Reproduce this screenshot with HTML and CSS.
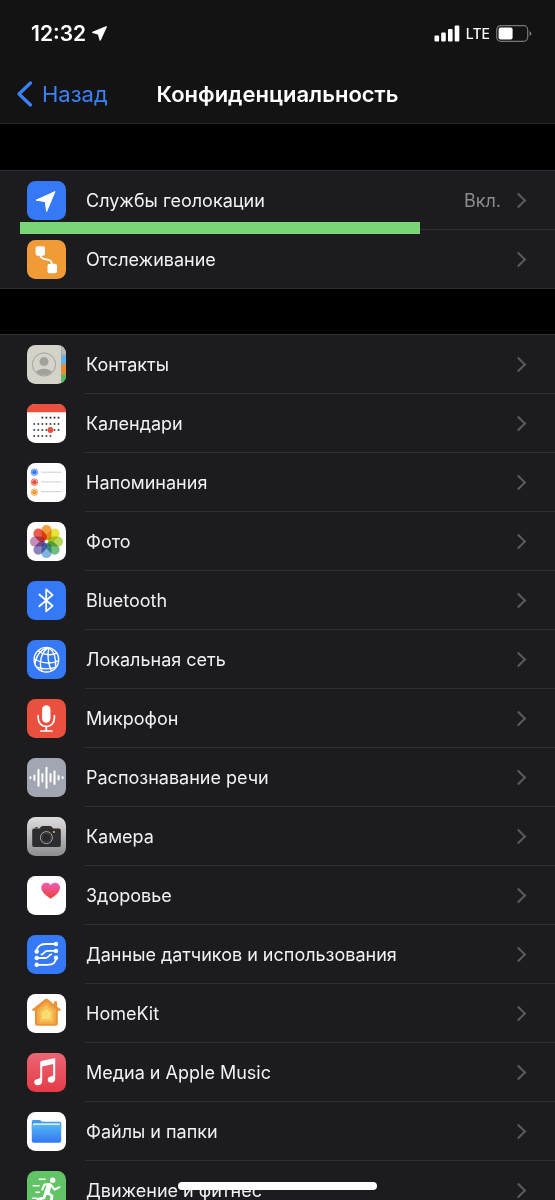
FILE: index.html
```html
<!DOCTYPE html>
<html lang="ru">

<head>
    <meta charset="UTF-8">
    <meta name="viewport" content="width=device-width, initial-scale=1.0">
    <title>Конфиденциальность</title>
    <link rel="stylesheet" href="styles.css">
</head>

<body>
    <!-- Header Section -->
    <header class="header">
        <div class="status-bar">
            <div class="status-left">
                <span class="time">12:32</span>
                <svg width="15" height="15" viewBox="0 0 15 15"><path d="M0.8 6.4 L14.2 0.8 L8.2 14 L6.6 8.2 Z" fill="#fff" stroke="#fff" stroke-width="1.4" stroke-linejoin="round"/></svg>
            </div>
            <div class="status-right">
                <svg width="26" height="17" viewBox="0 0 26 17" fill="#fff">
                    <rect x="0.5" y="10.5" width="4.6" height="6" rx="1"/>
                    <rect x="7.2" y="7.5" width="4.6" height="9" rx="1"/>
                    <rect x="14" y="4" width="4.6" height="12.5" rx="1"/>
                    <rect x="20.7" y="0.5" width="4.6" height="16" rx="1"/>
                </svg>
                <span class="network">LTE</span>
                <svg width="36" height="17" viewBox="0 0 36 17">
                    <rect x="0.7" y="0.7" width="31" height="15.6" rx="4" fill="none" stroke="#77777a" stroke-width="1.2"/>
                    <rect x="2.6" y="2.6" width="14" height="11.8" rx="2" fill="#fff"/>
                    <path d="M33.5 6 Q35.5 7 35.5 8.5 T33.5 11 Z" fill="#77777a"/>
                </svg>
            </div>
        </div>
        <div class="nav-bar">
            <button class="back-btn" type="button">
                <svg width="16" height="26" viewBox="0 0 16 26"><path d="M13.5 2 L2 13 L13.5 24" fill="none" stroke="#3a82f7" stroke-width="3.2" stroke-linecap="round" stroke-linejoin="round"/></svg>
                Назад
            </button>
            <h1>Конфиденциальность</h1>
        </div>
    </header>

    <!-- Settings list -->
    <main class="content">
        <ul class="group marked">
            <li><a class="row" href="#">
                <svg class="icon" viewBox="0 0 39 39"><rect width="39" height="39" rx="8.5" fill="#3579f6"/><path d="M9 19.2 L28 10.6 L19.6 30.6 L18.3 20.6 Z" fill="#fff" stroke="#fff" stroke-linejoin="round"/></svg>
                <span class="row-body"><span class="label">Службы геолокации</span><span class="value">Вкл.</span></span>
            </a></li>
            <li><a class="row" href="#">
                <svg class="icon" viewBox="0 0 39 39"><rect width="39" height="39" rx="8.5" fill="#f09a38"/><rect x="8.6" y="6.3" width="9.4" height="9.4" rx="2" fill="#fff"/><rect x="20.5" y="23.7" width="9.5" height="9.5" rx="2" fill="#fff"/><path d="M13.3 15 C13.3 22 25 16.5 25 24.5" fill="none" stroke="#fff" stroke-width="1.8"/></svg>
                <span class="row-body"><span class="label">Отслеживание</span></span>
            </a></li>
        </ul>

        <ul class="group">
            <li><a class="row" href="#">
                <svg class="icon" viewBox="0 0 39 39">
                    <clipPath id="tile"><rect width="39" height="39" rx="8.5"/></clipPath>
                    <g clip-path="url(#tile)"><rect width="39" height="39" fill="#d3d3c9"/><path fill="#a3a49f" d="M34 0h5v39h-5z"/><path fill="#b9bab5" d="M34.5 0h5v9.5h-5z"/><path fill="#5eb5f2" d="M34.5 10.2h5v8.8h-5z"/><path fill="#ee8c2d" d="M34.5 19.8h5v9.4h-5z"/><path fill="#51bd55" d="M34.5 30h5v9h-5z"/></g>
                    <clipPath id="face"><circle cx="17" cy="19.5" r="10.8"/></clipPath>
                    <circle cx="17" cy="19.5" r="11.6" fill="none" stroke="#9e9c96" stroke-width="0.9"/>
                    <g fill="#a3a099" clip-path="url(#face)"><circle cx="17" cy="16.6" r="4.5"/><ellipse cx="17" cy="29.5" rx="9.3" ry="5.8"/></g>
                </svg>
                <span class="row-body"><span class="label">Контакты</span></span>
            </a></li>
            <li><a class="row" href="#">
                <svg class="icon" viewBox="0 0 39 39">
                    <rect width="39" height="39" rx="8.5" fill="#fff"/><path d="M0 8.2 Q0 0 8.5 0 H30.5 Q39 0 39 8.2 Z" fill="#eb4f3d"/>
                    <g fill="none" stroke="#222" stroke-width="1.7" stroke-dasharray="1.7 2.35"><path d="M14.5 13.7 H32.5"/><path d="M6.4 20 H32.5"/><path d="M6.4 26 H32.5"/><path d="M6.4 32 H24.5"/></g>
                    <circle cx="23.4" cy="26" r="2.9" fill="#eb4f3d"/>
                </svg>
                <span class="row-body"><span class="label">Календари</span></span>
            </a></li>
            <li><a class="row" href="#">
                <svg class="icon" viewBox="0 0 39 39">
                    <rect width="39" height="39" rx="8.5" fill="#fff"/>
                    <g stroke-width="0.7"><circle cx="7.4" cy="9.2" r="3.3" fill="#cfe0fd" stroke="#3579f6"/><circle cx="7.4" cy="19.2" r="3.3" fill="#fbd5d0" stroke="#eb4f3d"/><circle cx="7.4" cy="29.2" r="3.3" fill="#fce6ca" stroke="#f09a38"/></g>
                    <circle cx="7.4" cy="9.2" r="2.3" fill="#3579f6"/><circle cx="7.4" cy="19.2" r="2.3" fill="#eb4f3d"/><circle cx="7.4" cy="29.2" r="2.3" fill="#f09a38"/>
                    <path d="M14 9.2 H34.5 M14 18.9 H34.5 M14 28.7 H34.5" stroke="#cfcfd2"/>
                </svg>
                <span class="row-body"><span class="label">Напоминания</span></span>
            </a></li>
            <li><a class="row" href="#">
                <svg class="icon" viewBox="0 0 39 39">
                    <rect width="39" height="39" rx="8.5" fill="#fff"/>
                    <g class="petals" transform="translate(19.5 19.6)">
                        <rect x="-5" y="-16.5" width="10" height="15" rx="5" fill="#f3a03f"/>
                        <rect x="-5" y="-16.5" width="10" height="15" rx="5" fill="#e9e23d" transform="rotate(45)"/>
                        <rect x="-5" y="-16.5" width="10" height="15" rx="5" fill="#b9d55b" transform="rotate(90)"/>
                        <rect x="-5" y="-16.5" width="10" height="15" rx="5" fill="#71bd84" transform="rotate(135)"/>
                        <rect x="-5" y="-16.5" width="10" height="15" rx="5" fill="#7fb3e0" transform="rotate(180)"/>
                        <rect x="-5" y="-16.5" width="10" height="15" rx="5" fill="#8f83bd" transform="rotate(225)"/>
                        <rect x="-5" y="-16.5" width="10" height="15" rx="5" fill="#c48cb9" transform="rotate(270)"/>
                        <rect x="-5" y="-16.5" width="10" height="15" rx="5" fill="#e85d4b" transform="rotate(315)"/>
                    </g>
                    <circle cx="19.5" cy="19.6" r="1.2" fill="#fff"/>
                </svg>
                <span class="row-body"><span class="label">Фото</span></span>
            </a></li>
            <li><a class="row" href="#">
                <svg class="icon" viewBox="0 0 39 39"><rect width="39" height="39" rx="8.5" fill="#3579f6"/><path d="M12.3 13.5 L25.5 24.8 L19.2 30.4 V8.4 L25.5 14 L12.3 25.3" fill="none" stroke="#fff" stroke-width="1.8" stroke-linejoin="round" stroke-linecap="round"/></svg>
                <span class="row-body"><span class="label">Bluetooth</span></span>
            </a></li>
            <li><a class="row" href="#">
                <svg class="icon" viewBox="0 0 39 39"><rect width="39" height="39" rx="8.5" fill="#3579f6"/><g fill="none" stroke="#fff" stroke-width="1.4"><circle cx="19.4" cy="19.7" r="12.3"/><path d="M22 7.7 C15 11 11 22 15 31.2"/><path d="M22 7.7 C20 14 21 24 24.5 30.8"/><path d="M22 7.7 C26.5 11 29.5 18 28.5 27.8"/><path d="M22 7.7 C15 8.5 10 13 7.8 24"/><path d="M11 10.6 C16 15.5 25 15.5 29.8 13.2"/><path d="M7.2 18.5 C14 23.5 25 24.5 31.6 20.5"/><path d="M9.5 27 C15 29 23 29.5 29 27.2"/></g></svg>
                <span class="row-body"><span class="label">Локальная сеть</span></span>
            </a></li>
            <li><a class="row" href="#">
                <svg class="icon" viewBox="0 0 39 39"><rect width="39" height="39" rx="8.5" fill="#eb4f3d"/><rect x="15.1" y="6.3" width="8.4" height="17.4" rx="4.2" fill="#fff"/><path d="M11.2 16.6 V19 C11.2 30.3 27.4 30.3 27.4 19 V16.6 M19.3 27.5 V32 M13.8 32 H24.9" fill="none" stroke="#fff" stroke-width="1.7" stroke-linecap="round"/></svg>
                <span class="row-body"><span class="label">Микрофон</span></span>
            </a></li>
            <li><a class="row" href="#">
                <svg class="icon" viewBox="0 0 39 39"><rect width="39" height="39" rx="8.5" fill="#a1a6b2"/><path d="M3.4 19.3v.8M7.4 17.5v4.4M11.5 11.7v16M15.4 16v7.4M19.5 9.7v20M23.5 16v7.4M27.5 13.3v12.8M31.6 18v3.4M35.6 19.3v.8" stroke="#fff" stroke-width="2" stroke-linecap="round"/></svg>
                <span class="row-body"><span class="label">Распознавание речи</span></span>
            </a></li>
            <li><a class="row" href="#">
                <svg class="icon" viewBox="0 0 39 39">
                    <linearGradient id="silver" x2="0" y2="1"><stop stop-color="#dededf"/><stop offset="1" stop-color="#8d8d90"/></linearGradient>
                    <rect width="39" height="39" rx="8.5" fill="url(#silver)"/>
                    <rect x="8" y="9.9" width="3" height="1.5" rx="0.7" fill="#555"/>
                    <path d="M7 11.6 H12.5 L14.2 9.6 Q14.8 9 15.7 9 H23 Q23.9 9 24.5 9.6 L26.2 11.6 H32 Q33.8 11.6 33.8 13.4 V28.2 Q33.8 30 32 30 H7 Q5.2 30 5.2 28.2 V13.4 Q5.2 11.6 7 11.6 Z" fill="#2d2d2f"/>
                    <circle cx="19.4" cy="20.6" r="6" fill="#29292b" stroke="#b5b5b7" stroke-width="0.9"/><circle cx="19.4" cy="20.6" r="4.3" fill="none" stroke="#48484b" stroke-width="0.7"/>
                    <circle cx="26.9" cy="15" r="1" fill="#f3c931"/>
                </svg>
                <span class="row-body"><span class="label">Камера</span></span>
            </a></li>
            <li><a class="row" href="#">
                <svg class="icon" viewBox="0 0 39 39">
                    <linearGradient id="heart" x2="0" y2="1"><stop stop-color="#ec5fb4"/><stop offset="1" stop-color="#ee3f38"/></linearGradient>
                    <rect width="39" height="39" rx="8.5" fill="#fff"/><path d="M23.7 22.7 C19 19.6 14.3 16 14.3 11.7 C14.3 6.7 20.8 4.9 23.7 9 C26.6 4.9 33 6.7 33 11.7 C33 16 28.4 19.6 23.7 22.7 Z" fill="url(#heart)"/>
                </svg>
                <span class="row-body"><span class="label">Здоровье</span></span>
            </a></li>
            <li><a class="row" href="#">
                <svg class="icon" viewBox="0 0 39 39"><rect width="39" height="39" rx="8.5" fill="#3579f6"/><path d="M29 9 H18.5 C13 9 9.7 12 9.7 16.5 M29 15.9 H20.5 C17 15.9 16.8 19.5 14.5 19.5 M9.7 23 H18.5 C22 23 21.8 19.3 24.3 19.3 M9.7 29.8 H20.5 C26 29.8 29 27 29 22.7" fill="none" stroke="#fff" stroke-width="1.8" stroke-linecap="round"/><g fill="#fff"><circle cx="29" cy="9" r="2.2"/><circle cx="29" cy="15.9" r="2.2"/><circle cx="29" cy="22.7" r="2.2"/><circle cx="9.7" cy="16.5" r="2.2"/><circle cx="9.7" cy="23" r="2.2"/><circle cx="9.7" cy="29.8" r="2.2"/></g></svg>
                <span class="row-body"><span class="label">Данные датчиков и использования</span></span>
            </a></li>
            <li><a class="row" href="#">
                <svg class="icon" viewBox="0 0 39 39">
                    <rect width="39" height="39" rx="8.5" fill="#fff"/>
                    <path d="M18.2 5.1 Q19.4 4.3 20.6 5.1 L27 10.2 V8 Q27 7.2 27.8 7.2 H29.2 Q30 7.2 30 8 V12.6 L33.8 15.6 Q34 16.7 32.8 16.7 H30.8 V29.7 Q30.8 31.7 28.8 31.7 H10 Q8 31.7 8 29.7 V16.7 H6 Q4.8 16.7 5 15.6 Z" fill="#eb9138"/>
                    <path d="M19.4 7.8 L28.8 15.3 V28.2 Q28.8 30 27 30 H11.8 Q10 30 10 28.2 V15.3 Z" fill="#f4aa47"/>
                    <path d="M19.4 11.3 L26.3 16.8 V26 Q26.3 27.5 24.8 27.5 H14 Q12.5 27.5 12.5 26 V16.8 Z" fill="#f6c255"/>
                    <path d="M19.4 14.8 L23.9 18.4 V24 Q23.9 25 22.9 25 H15.9 Q14.9 25 14.9 24 V18.4 Z" fill="#f9dc73"/>
                </svg>
                <span class="row-body"><span class="label">HomeKit</span></span>
            </a></li>
            <li><a class="row" href="#">
                <svg class="icon" viewBox="0 0 39 39">
                    <linearGradient id="music" x2="0" y2="1"><stop stop-color="#ec6674"/><stop offset="1" stop-color="#e63b48"/></linearGradient>
                    <rect width="39" height="39" rx="8.5" fill="url(#music)"/>
                    <path d="M13.2 9.2 Q13.2 8.2 14.2 8 L27 5.2 Q28.2 5 28.2 6.1 V26 C28.2 30.8 20.7 31 20.7 26.8 C20.7 23.6 24.5 23.7 26.2 22.6 V11 L15.2 13.4 V28.3 C15.2 33.5 7.2 33.5 7.2 29.2 C7.2 26 11.5 26.1 13.2 25 Z" fill="#fff"/>
                </svg>
                <span class="row-body"><span class="label">Медиа и Apple Music</span></span>
            </a></li>
            <li><a class="row" href="#">
                <svg class="icon" viewBox="0 0 39 39">
                    <linearGradient id="folder" x2="0" y2="1"><stop stop-color="#55b5f4"/><stop offset="1" stop-color="#3377f4"/></linearGradient>
                    <rect width="39" height="39" rx="8.5" fill="#fff"/>
                    <path d="M4.8 9.5 Q4.8 8 6.3 8 H12.3 Q13.3 8 14 8.7 L15 9.7 H32.6 Q34.2 9.7 34.2 11.3 V18 H4.8 Z" fill="#3f9bea"/>
                    <rect x="6" y="11.2" width="27" height="3" rx="0.8" fill="#d3eafb"/>
                    <path d="M4.8 13 H34.2 V28.8 Q34.2 30.7 32.3 30.7 H6.7 Q4.8 30.7 4.8 28.8 Z" fill="url(#folder)"/>
                </svg>
                <span class="row-body"><span class="label">Файлы и папки</span></span>
            </a></li>
            <li><a class="row" href="#">
                <svg class="icon" viewBox="0 0 39 39">
                    <rect width="39" height="39" rx="8.5" fill="#62c466"/><circle cx="25.7" cy="9.2" r="2.7" fill="#fff"/>
                    <g fill="none" stroke="#fff" stroke-linecap="round" stroke-linejoin="round"><path d="M12.3 8.2H18M6.2 14.8H12M9 21.2H12.5M5.5 27.3H9.5" stroke-width="1.5"/><path d="M22 14.5 L20 21.5" stroke-width="5"/><path d="M22.5 13 L17.5 13.4 L15.3 18.5 M24 14 L27.5 18.7 L32.5 16.2" stroke-width="2"/><path d="M20.5 21.5 L25 25 L24 32.5 M18.8 21.5 L17 27 L11 28.2" stroke-width="2.8"/></g>
                </svg>
                <span class="row-body"><span class="label">Движение и фитнес</span></span>
            </a></li>
        </ul>
    </main>

    <div class="home-indicator"></div>
</body>

</html>
```
FILE: styles.css
```css
/* General Reset */
* {
    margin: 0;
    padding: 0;
    box-sizing: border-box;
}

body {
    font-family: Inter, "Noto Sans", sans-serif;
    font-size: 18px;
    background-color: #000;
    color: #f2f2f4;
    height: 100vh;
    display: flex;
    flex-direction: column;
    overflow: hidden;
}

svg {
    display: block;
    flex: none;
}

/* Header Section */
.header {
    background-color: #131313;
    border-bottom: 1px solid #262628;
    color: #fff;
}

.status-bar {
    display: flex;
    justify-content: space-between;
    align-items: center;
    padding: 20px 23px 0 31px;
    height: 47px;
}

.status-left,
.status-right {
    display: flex;
    align-items: center;
    gap: 6px;
}

.time {
    font-size: 21px;
    font-weight: 600;
}

.network {
    font-size: 14px;
    font-weight: 500;
}

.nav-bar {
    display: grid;
    grid-template-columns: 1fr auto 1fr;
    align-items: center;
    height: 76px;
    padding: 18px 17px 0;
}

.back-btn {
    display: flex;
    align-items: center;
    gap: 9px;
    background: none;
    border: none;
    color: #3a82f7;
    font-family: inherit;
    font-size: 22px;
    cursor: pointer;
}

.nav-bar h1 {
    font-size: 22px;
    font-weight: 600;
}

/* Settings list */
.content {
    flex: 1;
    min-height: 0;
    overflow-y: auto;
    scrollbar-width: none;
    padding-top: 46px;
}

.group {
    position: relative;
    list-style: none;
    background-color: #1c1c1e;
    border: solid #303033;
    border-width: 1px 0;
    margin-bottom: 45px;
}

.row {
    display: flex;
    align-items: center;
    gap: 19px;
    height: 59px;
    padding-left: 27px;
    color: inherit;
    text-decoration: none;
}

.icon {
    width: 39px;
    height: 39px;
}

.petals {
    isolation: isolate;
}

/* Overlapping petals get darker */
.petals rect {
    mix-blend-mode: multiply;
}

.row-body {
    display: flex;
    align-items: center;
    flex: 1;
    height: 100%;
    padding: 0 31px 0 1px;
    border-bottom: 1px solid #303033;
}

.group li:last-child .row,
.group li:last-child .row-body {
    height: 58px;
    border-bottom: none;
}

.label {
    flex: 1;
}

.value {
    color: #8b8b90;
    margin-right: 12px;
}

/* Arrow at the end of a row */
.row-body::after {
    content: '';
    width: 9px;
    height: 9px;
    border: solid #5b5b5f;
    border-width: 2px 2px 0 0;
    transform: rotate(45deg);
}

/* Green marker under the first row */
.marked::after {
    content: '';
    position: absolute;
    top: 51px;
    left: 20px;
    width: 72%;
    height: 12px;
    background-color: #79d576;
}

.home-indicator {
    position: fixed;
    bottom: 10px;
    left: 32%;
    right: 32%;
    height: 8px;
    border-radius: 4px;
    background-color: #fff;
}
```
